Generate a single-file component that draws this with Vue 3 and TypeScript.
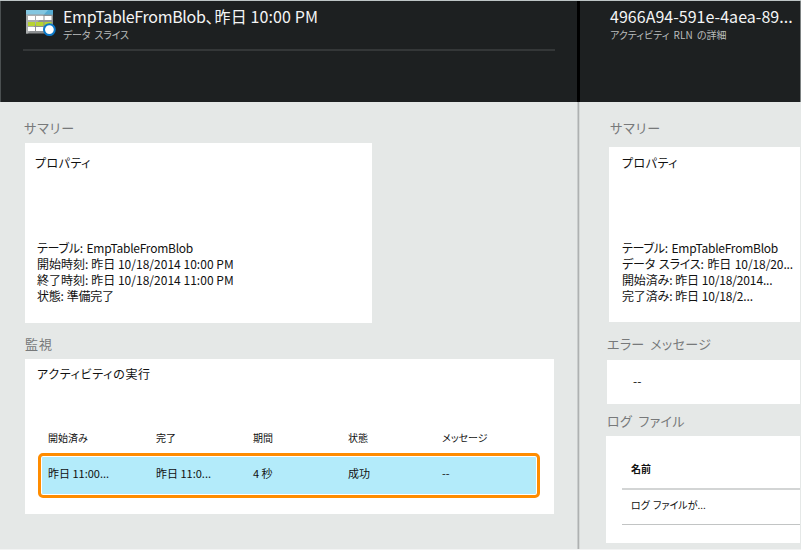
<script setup lang="ts">
interface Run {
  started: string
  completed: string
  duration: string
  status: string
  message: string
}
interface Prop {
  label: string
  value: string
  kind: string
}

const columns: string[] = ['開始済み', '完了', '期間', '状態', 'メッセージ']
const runs: Run[] = [
  { started: '昨日 11:00...', completed: '昨日 11:0...', duration: '4 秒', status: '成功', message: '--' },
]
const sliceProps: Prop[] = [
  { label: 'テーブル:', value: 'EmpTableFromBlob', kind: 'name' },
  { label: '開始時刻:', value: '昨日 10/18/2014 10:00 PM', kind: 'time' },
  { label: '終了時刻:', value: '昨日 10/18/2014 11:00 PM', kind: 'time' },
  { label: '状態:', value: '準備完了', kind: 'state' },
]
const runProps: Prop[] = [
  { label: 'テーブル:', value: 'EmpTableFromBlob', kind: 'name' },
  { label: 'データ スライス:', value: '昨日 10/18/20...', kind: 'slice-time' },
  { label: '開始済み:', value: '昨日 10/18/2014...', kind: 'cut' },
  { label: '完了済み:', value: '昨日 10/18/2...', kind: 'cut' },
]
</script>

<template>
  <main class="portal">
    <section class="blade slice">
      <header class="head">
        <svg class="icon" viewBox="0 0 31 28" width="31" height="28">
          <rect x="1" y="1" width="27" height="23.500" fill="#8d9092" />
          <rect x="1" y="1" width="27" height="4.600" fill="#55acd3" />
          <path d="M1 1h22l-4 4.600H1z" fill="#83c6e0" />
          <path d="M1 5.600h18L3 24.500H1z" fill="#a9acad" />
          <g fill="#fff">
            <path d="M3 7h7v4H3zM11 7h7.500v4H11zM19.500 7h7v4h-7z" />
            <path d="M3 18h7v4H3zM11 18h7.500v4H11zM19.500 18h7v4h-7z" />
          </g>
          <path d="M3 13h7v4H3zM11 13h7.500v4H11zM19.500 13h7v4h-7z" fill="#b6d332" />
          <circle cx="24.400" cy="20.600" r="5.400" fill="#fff" stroke="#0b78c8" stroke-width="2" />
        </svg>
        <div class="heading">
          <h1><span class="dataset">EmpTableFromBlob</span>、<span class="when">昨日 10:00 PM</span></h1>
          <p>データ スライス</p>
        </div>
      </header>
      <h2 class="label">サマリー</h2>
      <div class="card summary">
        <h3>プロパティ</h3>
        <ul class="props">
          <li v-for="p in sliceProps" :key="p.label" :class="p.kind">{{ p.label }} {{ p.value }}</li>
        </ul>
      </div>
      <h2 class="label monitor">監視</h2>
      <div class="card activity">
        <h3>アクティビティの実行</h3>
        <div class="row columns">
          <span v-for="c in columns" :key="c">{{ c }}</span>
        </div>
        <div v-for="r in runs" :key="r.started" class="row selected">
          <span>{{ r.started }}</span>
          <span>{{ r.completed }}</span>
          <span>{{ r.duration }}</span>
          <span>{{ r.status }}</span>
          <span>{{ r.message }}</span>
        </div>
      </div>
    </section>
    <div class="divider"></div>
    <section class="blade details">
      <header class="head">
        <div class="heading">
          <h1>4966A94-591e-4aea-89...</h1>
          <p>アクティビティ RLN の詳細</p>
        </div>
      </header>
      <h2 class="label">サマリー</h2>
      <div class="card summary">
        <h3>プロパティ</h3>
        <ul class="props">
          <li v-for="p in runProps" :key="p.label" :class="p.kind">{{ p.label }} {{ p.value }}</li>
        </ul>
      </div>
      <h2 class="label errors">エラー メッセージ</h2>
      <div class="card error">--</div>
      <h2 class="label logs">ログ ファイル</h2>
      <div class="card files">
        <div class="file title">名前</div>
        <div class="file">ログ ファイルが...</div>
      </div>
    </section>
  </main>
</template>

<style>
body {
  margin: 0;
  overflow: hidden;
}
</style>

<style scoped>
.portal {
  box-sizing: border-box;
  display: flex;
  width: 801px;
  height: 550px;
  border-top: 1px solid #bdc5c5;
  border-bottom: 1px solid #f2f3f3;
  background: #e5e8e7;
  color: #111;
  overflow: hidden;
  white-space: nowrap;
  font: 12px/16px "Noto Sans CJK JP", sans-serif;
  font-feature-settings: "palt";
}
h1, h2, h3, p, ul {
  margin: 0;
  padding: 0;
  font-weight: 400;
  list-style: none;
}
.blade {
  box-sizing: border-box;
  overflow: hidden;
}
.slice {
  width: 577px;
}
.details {
  width: 221px;
}
.divider {
  width: 3px;
  background: linear-gradient(#000 101px, transparent 101px),
    linear-gradient(90deg, #c9cccc 1px, #aeb1b1 1px 2px, #d5d8d7 2px);
}
.head {
  box-sizing: border-box;
  display: flex;
  height: 101px;
  background: #1d2021;
}
.slice .head {
  padding: 8px 22px 0;
  border-left: 1px solid #4b5051;
}
.details .head {
  padding: 7px 0 0 30px;
  border-right: 1px solid #7d8282;
}
.slice .heading {
  box-sizing: border-box;
  width: 499px;
  height: 43px;
  padding-left: 7px;
  border-bottom: 2px solid #343738;
  margin-top: -1px;
}
.icon {
  flex: none;
  box-sizing: content-box;
  height: 28px;
  padding: 0 0 12px 2px;
  border-bottom: 2px solid #343738;
}
h1 {
  font-size: 16px;
  line-height: 16px;
  color: #f4f5f5;
}
.dataset {
  letter-spacing: -0.3px;
}
.when {
  margin-left: 1px;
  letter-spacing: 0.12px;
}
.details h1 {
  letter-spacing: 0.03px;
}
.head p {
  margin-top: 4px;
  font-size: 10px;
  line-height: 13px;
  color: #babdbd;
  word-spacing: 2px;
}
.slice .head p {
  letter-spacing: -0.2px;
}
.label {
  margin: 16px 0 0 24px;
  font-size: 13px;
  line-height: 20px;
  letter-spacing: 0.9px;
  color: #77797a;
}
.card {
  box-sizing: border-box;
  background: #fff;
}
.slice .card {
  margin-left: 25px;
}
.slice .summary {
  width: 347px;
  height: 180px;
  margin-top: 5px;
  padding: 11px 10px 0;
}
.summary h3, .activity h3 {
  font-size: 12px;
  line-height: 18px;
  letter-spacing: 0.45px;
}
.activity h3 {
  letter-spacing: 0.7px;
}
.props {
  margin-top: 68px;
  padding-left: 2px;
}
.props li {
  height: 16px;
}
.props .name {
  letter-spacing: -0.25px;
  word-spacing: 1.2px;
}
.props .time {
  letter-spacing: 0.02px;
}
.props .state {
  letter-spacing: -0.2px;
  word-spacing: 0.5px;
}
.props .cut {
  letter-spacing: -0.15px;
  word-spacing: 0.3px;
}
.props .slice-time {
  letter-spacing: -0.1px;
  word-spacing: 1px;
}
.monitor {
  margin-top: 11px;
  margin-left: 25px;
}
.activity {
  width: 529px;
  height: 155px;
  margin-top: 5px;
  padding: 6px 12px 0;
}
.row {
  display: grid;
  grid-template-columns: 108px 97px 95px 94px 1fr;
  font-size: 11px;
}
.columns {
  margin-top: 47px;
  padding-left: 11px;
  font-size: 10px;
  line-height: 16px;
}
.selected {
  box-sizing: border-box;
  width: 502px;
  height: 45px;
  margin: 7px 0 0 1px;
  padding-left: 7px;
  border: 3px solid #ff8c00;
  border-radius: 5px;
  box-shadow: inset 0 0 0 1px #fff;
  background: #b3ebfa;
  line-height: 35px;
}
.details .label {
  margin-left: 30px;
}
.details .summary {
  height: 175px;
  margin: 9px 1px 0 29px;
  padding: 7px 13px 0;
}
.details .props {
  padding-left: 0;
}
.details .errors {
  margin: 12px 0 0 27px;
  letter-spacing: 0.35px;
  word-spacing: 2.5px;
}
.error {
  height: 44px;
  margin: 6px 1px 0 27px;
  padding: 13px 26px 0;
}
.details .logs {
  margin: 7px 0 0 27px;
  letter-spacing: 0.35px;
  word-spacing: 3px;
}
.files {
  height: 107px;
  margin: 5px 1px 0 26px;
  padding: 19px 0 0 16px;
}
.file {
  height: 34px;
  padding-left: 9px;
  border-bottom: 1px solid #c2c4c4;
  font-size: 10px;
  line-height: 29px;
  word-spacing: 1px;
}
.title {
  height: 33px;
  border-bottom-width: 2px;
  border-bottom-color: #d3d5d5;
  font-weight: 700;
  line-height: 28px;
}
</style>
